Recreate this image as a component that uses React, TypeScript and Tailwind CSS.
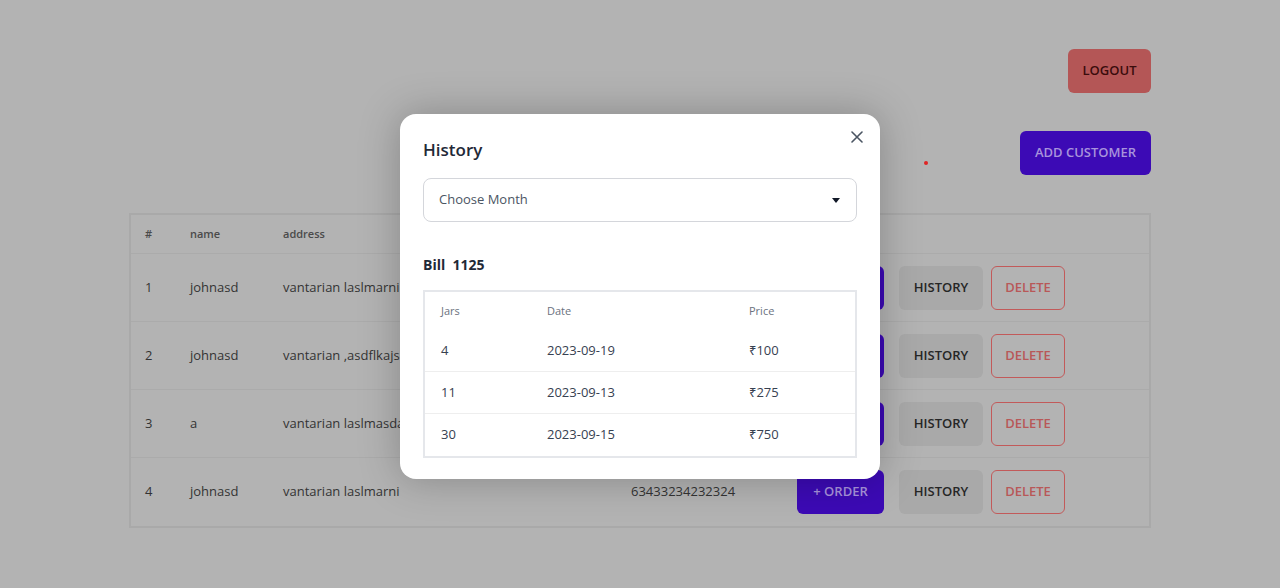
import React from "react";

const rows = [
  { id: 1, name: "johnasd", address: "vantarian laslmarni", phone: "63433234232324" },
  { id: 2, name: "johnasd", address: "vantarian ,asdflkajsdf", phone: "63433234232324" },
  { id: 3, name: "a", address: "vantarian laslmasdar", phone: "63433234232324" },
  { id: 4, name: "johnasd", address: "vantarian laslmarni", phone: "63433234232324" },
];

const history = [
  { jars: "4", date: "2023-09-19", price: "₹100" },
  { jars: "11", date: "2023-09-13", price: "₹275" },
  { jars: "30", date: "2023-09-15", price: "₹750" },
];

const grid = "grid grid-cols-[43px_93px_348px_166px_102px_92px_1fr] items-center";

export default function App() {
  return (
    <div
      className="relative min-h-[588px] w-full bg-[#b3b3b3] overflow-hidden"
      style={{ fontFamily: '"Open Sans", "Noto Sans", sans-serif' }}
    >
      <div className="mx-auto w-[1022px] pt-[49px]">
        <div className="flex justify-end">
          <button className="h-[44px] w-[83px] rounded-md bg-[#b45656] text-[13px] font-semibold text-[#3a0c0c]">
            LOGOUT
          </button>
        </div>
        <div className="mt-[38px] flex items-center justify-end">
          <span className="mr-[92px] mt-[20px] h-[4px] w-[4px] rounded-full bg-[#e02424]" />
          <button className="h-[44px] w-[131px] rounded-md bg-[#3c0ab5] text-[13px] font-semibold text-[#a893dc]">
            ADD CUSTOMER
          </button>
        </div>
        <div className="mt-[38px] border-2 border-[#a9a9a9]">
          <div className={`${grid} h-[39px] border-b border-[#ababab] text-[11px] font-semibold text-[#4a4a4a]`}>
            <div className="pl-[14px]">#</div>
            <div className="px-4">name</div>
            <div className="px-4">address</div>
            <div className="px-4">phone</div>
            <div className="px-4" />
            <div className="px-4" />
            <div className="px-4" />
          </div>
          {rows.map((r, i) => (
            <div
              key={r.id}
              className={`${grid} h-[68px] text-[13px] text-[#333333] ${i < rows.length - 1 ? "border-b border-[#ababab]" : ""}`}
            >
              <div className="pl-[14px]">{r.id}</div>
              <div className="px-4">{r.name}</div>
              <div className="px-4 whitespace-nowrap">{r.address}</div>
              <div className="px-4">{r.phone}</div>
              <div className="px-4">
                <button className="h-[44px] w-[87px] rounded-md bg-[#3c0ab5] text-[13px] font-semibold text-[#a893dc]">
                  + ORDER
                </button>
              </div>
              <div className="px-4">
                <button className="h-[44px] w-[84px] rounded-md bg-[#a9a9a9] text-[13px] font-semibold text-[#262626]">
                  HISTORY
                </button>
              </div>
              <div className="px-4">
                <button className="h-[44px] w-[74px] rounded-md border border-[#c25a5a] text-[13px] font-semibold text-[#b85858]">
                  DELETE
                </button>
              </div>
            </div>
          ))}
        </div>
      </div>

      <div className="absolute inset-0 flex justify-center pt-[114px]">
        <div className="relative h-[365px] w-[480px] rounded-2xl bg-white px-[23px] pt-[20px] shadow-[0_0_40px_rgba(0,0,0,0.25)]">
          <button className="absolute right-[17px] top-[17px] text-[#4b5563]">
            <svg width="12" height="12" viewBox="0 0 12 12" fill="none" stroke="currentColor" strokeWidth="1.6" strokeLinecap="round">
              <path d="M1 1L11 11M11 1L1 11" />
            </svg>
          </button>
          <h2 className="text-[17px] font-semibold leading-[32px] text-[#1f2937]">History</h2>
          <div className="mt-[12px] flex h-[44px] items-center justify-between rounded-lg border border-[#d4d6db] pl-[15px] pr-[16px] text-[13px] text-[#4b5563]">
            <span>Choose Month</span>
            <svg width="8" height="5" viewBox="0 0 8 5">
              <path d="M0 0H8L4 5Z" fill="#111827" />
            </svg>
          </div>
          <div className="mt-[33px] text-[14px] font-bold leading-[20px] text-[#1f2937]">
            Bill&nbsp; 1125
          </div>
          <div className="mt-[15px] border-2 border-[#e5e7eb]">
            <div className="grid h-[38px] grid-cols-[106px_202px_1fr] items-center text-[11px] font-medium text-[#6b7280]">
              <div className="px-4">Jars</div>
              <div className="px-4">Date</div>
              <div className="px-4">Price</div>
            </div>
            {history.map((h, i) => (
              <div
                key={i}
                className={`grid h-[42px] grid-cols-[106px_202px_1fr] items-center text-[13px] text-[#374151] ${i < history.length - 1 ? "border-b border-[#eeeeee]" : ""}`}
              >
                <div className="px-4">{h.jars}</div>
                <div className="px-4">{h.date}</div>
                <div className="px-4">{h.price}</div>
              </div>
            ))}
          </div>
        </div>
      </div>
    </div>
  );
}
